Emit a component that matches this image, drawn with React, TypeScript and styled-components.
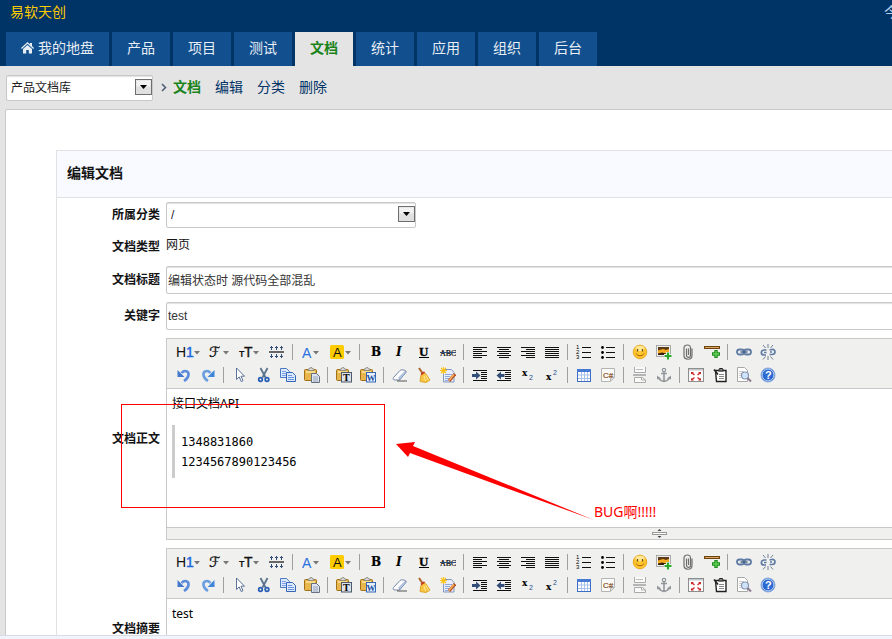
import React from 'react';
import styled, { createGlobalStyle, css } from 'styled-components';

const cjk = '"Liberation Sans", "Noto Sans CJK SC", sans-serif';

const GlobalStyle = createGlobalStyle`
  * { box-sizing: border-box; }
  html, body { margin: 0; }
  body {
    background: #e4e4e4;
    color: #141414;
    font: 12px/18px ${cjk};
    overflow: hidden;
  }
  button, input, select { font: inherit; color: inherit; }
`;

const Window = styled.div`
  height: 100vh;
  display: flex;
  flex-direction: column;
  overflow: hidden;
`;

const Page = styled.div`
  flex: 1;
  min-height: 0;
  width: calc(100% + 8px);
  overflow: hidden;
`;

const StatusStrip = styled.footer`
  flex: none;
  height: 4px;
  background: #f0f4fd;
  border-top: 1px solid #d9dce2;
`;

const Header = styled.header`
  background: #003366;
`;

const TopBar = styled.div`
  display: flex;
  justify-content: space-between;
  height: 32px;
  padding: 2px 2px 0 10px;
  font-size: 14px;
  line-height: 20px;
`;

const Brand = styled.a`
  color: #ffcc00;
  text-decoration: none;
`;

const DateText = styled.span`
  color: #b9d3ee;
`;

const Nav = styled.nav`
  display: flex;
  gap: 3px;
  padding-left: 6px;
`;

const NavTab = styled.a<{ $active?: boolean }>`
  display: flex;
  align-items: center;
  gap: 4px;
  height: 34px;
  padding: 0 15px 2px;
  font-size: 14px;
  color: #e8eef5;
  background: #114f8e;
  text-decoration: none;
  ${p => p.$active && css`
    background: #e4e4e4;
    color: #1a831a;
    font-weight: bold;
  `}
`;

const SubNav = styled.div`
  display: flex;
  align-items: center;
  height: 43px;
  padding-left: 6px;
`;

const SelectBox = styled.div<{ $wide?: boolean }>`
  position: relative;
  width: ${p => (p.$wide ? '250px' : '147px')};
  height: 26px;
`;

const Select = styled.select`
  appearance: none;
  width: 100%;
  height: 100%;
  padding: 0 24px 0 4px;
  border: 1px solid #c8c8c8;
  border-radius: 2px;
  background: #fff;
  box-shadow: inset 0 1px 1px #e2e2e2;
  color: #222;
  outline: none;
`;

const DropArrow = styled.svg`
  position: absolute;
  right: 1px;
  top: 4px;
  pointer-events: none;
`;

const Crumbs = styled.div`
  display: flex;
  align-items: center;
  gap: 14px;
  padding: 0 0 2px 6px;
  font-size: 14px;
`;

const Chevron = styled.svg`
  margin-left: 8px;
`;

const Crumb = styled.a<{ $active?: boolean }>`
  color: ${p => (p.$active ? '#1a831a' : '#003366')};
  font-weight: ${p => (p.$active ? 'bold' : 'normal')};
  text-decoration: none;
`;

const Main = styled.main`
  margin-left: 5px;
  padding: 40px 0 0 50px;
  background: #fff;
  border: 1px solid #c9c9c9;
  border-radius: 2px;
`;

const FormPanel = styled.form`
  border: 1px solid #e2e2e2;
`;

const FormTitle = styled.h1`
  margin: 0;
  height: 47px;
  padding: 0 10px 2px;
  display: flex;
  align-items: center;
  font-size: 14px;
  background: #f8faff;
  border-bottom: 1px solid #e2e2e2;
`;

const Row = styled.div`
  position: relative;
  display: grid;
  grid-template-columns: 103px minmax(0, 1fr);
  column-gap: 6px;
  align-items: center;
  padding: 4px 0;
`;

const Label = styled.label`
  text-align: right;
  font-weight: bold;
`;

const StaticValue = styled.output`
  line-height: 18px;
  padding-bottom: 4px;
`;

const TextInput = styled.input`
  width: 100%;
  height: 28px;
  padding: 0 1px 1px;
  border: 1px solid #c8c8c8;
  border-radius: 2px;
  box-shadow: inset 0 1px 1px #e2e2e2;
  background: #fff;
  color: #333;
  outline: none;
`;

const EditorFrame = styled.div`
  border: 1px solid #c8c8c8;
  background: #fff;
`;

const Toolbar = styled.div`
  height: 50px;
  padding: 1px 5px;
  background: #f0f0ee;
  border-bottom: 1px solid #c8c8c8;
`;

const ToolRow = styled.div`
  display: flex;
  height: 23px;
  align-items: center;
`;

const ToolButton = styled.button`
  flex: none;
  display: flex;
  padding: 0 4px;
  border: 0;
  background: none;
  cursor: pointer;
`;

const Divider = styled.span`
  flex: none;
  width: 1px;
  height: 16px;
  margin: 0 4px 0 3px;
  background: #a0a0a0;
`;

const EditorBody = styled.div<{ $tall?: boolean }>`
  height: ${p => (p.$tall ? '138px' : '98px')};
  padding: 6px 5px;
  color: #000;
  font-family: "Noto Sans", "Noto Sans CJK SC", sans-serif;
  outline: none;
`;

const Paragraph = styled.p`
  margin: 0;
  line-height: 18px;
`;

const CodeBlock = styled.pre`
  margin: 12px 0 0;
  padding: 7px 0 6px 6px;
  border-left: 3px solid #ccc;
  font: 12px/20px "DejaVu Sans Mono", monospace;
`;

const ResizeBar = styled.div`
  display: flex;
  align-items: center;
  height: 12px;
  background: #f0f0ee;
  border-top: 1px solid #c8c8c8;
`;

const ResizeGrip = styled.svg`
  margin-left: 485px;
`;

const Highlight = styled.div`
  position: absolute;
  left: 64px;
  top: 70px;
  width: 264px;
  height: 104px;
  border: 1px solid #ff0000;
  pointer-events: none;
`;

const PointerArrow = styled.svg`
  position: absolute;
  left: 338px;
  top: 106px;
  pointer-events: none;
`;

const Note = styled.span`
  position: absolute;
  left: 537px;
  top: 168px;
  color: #ff0000;
  font: 14px/20px "Noto Sans", "Noto Sans CJK SC", sans-serif;
`;

const sans = 'Liberation Sans, Arial, sans-serif';
const serif = 'Liberation Serif, serif';

const Caret = ({ x }: { x: number }) => <path d={`M${x} 7h6l-3 3.5z`} fill="#777" />;

const lines = (rows: [number, number][], step = 2, start = 3) =>
  rows.map(([x, w], i) => <rect key={i} x={x} y={start + i * step} width={w} height="1" fill="#111" />);

const Clipboard = () => (
  <>
    <rect x=".5" y="2.5" width="12" height="11" rx="1" fill="#e8b64c" stroke="#a06f16" />
    <path d="M2 4h9v2H2z" fill="#f8dc8c" />
    <path d="M4 3.5V2h1.5L6 .7h2L8.500 2H10v1.500z" fill="#dfe0e4" stroke="#77705c" strokeWidth=".7" />
  </>
);

type Icon = { label: string; w?: number; art: React.ReactNode };

const icons: Record<string, Icon> = {
  heading: { label: '段落', w: 25, art: <>
    <text x="0" y="13" fontFamily={sans} fontSize="14" fill="#111">H</text>
    <text x="10" y="13" fontFamily={sans} fontSize="14" fill="#1a66e0" stroke="#1a66e0" strokeWidth=".4">1</text>
    <Caret x={18} /></> },
  font: { label: '字体', w: 21, art: <>
    <text x="0" y="13" fontFamily="DejaVu Sans, DejaVu Serif, serif" fontSize="14" fill="#111" stroke="#111" strokeWidth=".3">ℱ</text>
    <Caret x={14} /></> },
  size: { label: '文字大小', w: 23, art: <>
    <text x="1" y="13" fontFamily={sans} fontSize="9" fontWeight="bold" fill="#111">T</text>
    <text x="6" y="13" fontFamily={sans} fontSize="14" fill="#111" stroke="#111" strokeWidth=".3">T</text>
    <Caret x={15} /></> },
  lineheight: { label: '行距', art: <>
    <path d="M0 7h15v2H0z" fill="#666" />
    <path d="M2.500 2v4M7.500 2v4M12.500 2v4M2.500 10v4M7.500 10v4M12.500 10v4" stroke="#334e78" />
    <path d="M1 3h3v1H1zM6 3h3v1H6zM11 3h3v1h-3zM1 12h3v1H1zM6 12h3v1H6zM11 12h3v1h-3z" fill="#334e78" /></> },
  color: { label: '文字颜色', w: 20, art: <>
    <text x="1" y="14" fontFamily={sans} fontSize="14" fill="#2a6fe0">A</text>
    <Caret x={12} /></> },
  hilite: { label: '文字背景', w: 23, art: <>
    <rect x="1" y="1" width="14" height="14" rx="1.500" fill="#ffcc00" />
    <text x="4" y="12.500" fontFamily={sans} fontSize="13" fill="#111">A</text>
    <Caret x={16} /></> },
  bold: { label: '粗体', art: <text x="3" y="12" fontFamily="DejaVu Serif, serif" fontSize="12" fontWeight="bold" stroke="#000" strokeWidth=".2">B</text> },
  italic: { label: '斜体', art: <text x="4" y="12" fontFamily="DejaVu Serif, serif" fontSize="12" fontWeight="bold" fontStyle="italic">I</text> },
  underline: { label: '下划线', art: <>
    <text x="3" y="12" fontFamily={serif} fontSize="13" fontWeight="bold" stroke="#000" strokeWidth=".3">U</text>
    <path d="M3 13h10v1H3z" /></> },
  strike: { label: '删除线', art: <>
    <text x="0" y="11.500" fontFamily={serif} fontSize="8" stroke="#111" strokeWidth=".2">ABC</text>
    <path d="M0 8h16v1H0z" fill="#334e78" /></> },
  left: { label: '左对齐', art: lines([[1, 14], [1, 9], [1, 14], [1, 9], [1, 14], [1, 9]]) },
  center: { label: '居中', art: lines([[1, 14], [3, 10], [1, 14], [3, 10], [1, 14], [3, 10]]) },
  right: { label: '右对齐', art: lines([[1, 14], [6, 9], [1, 14], [6, 9], [1, 14], [6, 9]]) },
  justify: { label: '两端对齐', art: lines([[1, 14], [1, 14], [1, 14], [1, 14], [1, 14], [1, 14]]) },
  ol: { label: '编号', art: <>
    {lines([[6, 9], [6, 9], [6, 9]], 5)}
    {['1', '2', '3'].map((n, i) => <text key={n} x="0" y={5 + i * 5} fontFamily={sans} fontSize="6">{n}</text>)}</> },
  ul: { label: '项目符号', art: <>
    {lines([[6, 9], [6, 9], [6, 9]], 5)}
    {[3.5, 8.5, 13.5].map(y => <circle key={y} cx="2.500" cy={y} r="1.400" />)}</> },
  smile: { label: '表情', art: <>
    <circle cx="8" cy="8" r="6.800" fill="#ffc72d" stroke="#eda623" />
    <ellipse cx="8" cy="4.500" rx="4.500" ry="2.800" fill="#ffe995" />
    <path d="M5.500 5v2.500M10.500 5v2.500" stroke="#7b430d" strokeWidth="1.300" />
    <path d="M4 9.500c1.500 3 6.500 3 8 0" fill="none" stroke="#a5570c" /></> },
  image: { label: '图片', art: <>
    <rect x=".5" y="1.500" width="14" height="11" fill="#eee" stroke="#999" strokeWidth=".8" />
    <path d="M2 3h11v8H2z" fill="#f7aa20" />
    <path d="M2 3h11v2l-3 1-3-1-5 1.500z" fill="#5b3a14" />
    <path d="M2 9.500l4-1 4 1h3V11H2z" fill="#33200d" />
    <path d="M12 8v8M8 12h8" stroke="#eef7ee" strokeWidth="4" />
    <path d="M12 8.500v7M8.500 12h7" stroke="#2ca82c" strokeWidth="2.200" /></> },
  attach: { label: '附件', art: <path d="M12 4.500v7c0 5-8 5-8 0V4c0-4 6.500-4 6.500 0v7.500c0 2.500-4 2.500-4 0V4.500M8.500 4.500v6.500" fill="none" stroke="#6e6e6e" strokeWidth="1.200" /> },
  hr: { label: '插入横线', art: <>
    <path d="M0 2h16v3H0z" fill="#6d4310" /><path d="M1 3h14v1H1z" fill="#d8a65c" />
    <path d="M12 6v8M8 10h8" stroke="#1d8a1d" strokeWidth="3.400" /><path d="M12 7v6M9 10h6" stroke="#5fd052" strokeWidth="1.400" /></> },
  link: { label: '超级链接', art: <>
    <rect x="1" y="5.500" width="7" height="5" rx="2.500" fill="none" stroke="#5e7ba4" strokeWidth="1.800" />
    <rect x="8" y="5.500" width="7" height="5" rx="2.500" fill="none" stroke="#5e7ba4" strokeWidth="1.800" />
    <path d="M4.500 8h7" stroke="#3f5880" strokeWidth="1.400" /></> },
  unlink: { label: '取消超级链接', art: <>
    <path d="M6.500 6H4C.5 6.500.5 11 4 11h2M9.500 6l2.500-.5c4-.5 4 5 0 5H9.500M4 8.500h2.500M10 8h2" fill="none" stroke="#5e7ba4" strokeWidth="1.700" />
    <path d="M8 4V0M5.500 4L3 1M10.500 4L13 1M8 12v4M5.500 12.500L3 15.500M10.500 12.500l2.500 3" stroke="#6f8098" /></> },
  undo: { label: '后退', art: <>
    <path d="M5.500 6C8.500 2.500 13 4 12.500 8c-.3 2.500-2 4.500-4.500 6" fill="none" stroke="#5b8bdc" strokeWidth="2.600" />
    <path d="M1.500 3v7h7z" fill="#4478cc" /></> },
  redo: { label: '前进', art: <>
    <path d="M10.500 6C7.500 2.500 3 4 3.500 8c.3 2.500 2 4.500 4.500 6" fill="none" stroke="#6b9ee0" strokeWidth="2.600" />
    <path d="M14.500 3v7h-7z" fill="#3f86d8" /></> },
  cursor: { label: '全选', art: <path d="M4.500 1v11.500l2.700-2.600 2 4.600 1.800-.8-2-4.500h3.500z" fill="#fff" stroke="#49648e" strokeWidth=".9" /> },
  cut: { label: '剪切', art: <>
    <path d="M4.500 1l5 9.500M11.500 1l-5 9.500" stroke="#5c738f" strokeWidth="1.800" />
    <circle cx="4.500" cy="12.500" r="1.800" fill="none" stroke="#2960b5" strokeWidth="1.800" />
    <circle cx="11" cy="12.500" r="1.800" fill="none" stroke="#2960b5" strokeWidth="1.800" /></> },
  copy: { label: '复制', art: <>
    <path d="M.5 1.500h6l3 3v6h-9z" fill="#dce8fb" stroke="#4c79c4" /><path d="M2 4.500h4M2 6.500h6M2 8.500h6" stroke="#7ba0e6" />
    <path d="M6.500 5.500h6l3 3v6h-9z" fill="#dce8fb" stroke="#3565b5" /><path d="M8 8.500h4M8 10.500h6M8 12.500h6" stroke="#6b94dd" /></> },
  paste: { label: '粘贴', art: <>
    <Clipboard />
    <path d="M7.500 6.500h5l3 3v6h-8z" fill="#dfe5ee" stroke="#66717f" /><path d="M9 10h5M9 12h5M9 14h5" stroke="#8796ad" strokeWidth=".8" /></> },
  pasteText: { label: '粘贴为无格式文本', art: <>
    <Clipboard />
    <rect x="5.500" y="5.500" width="10" height="9.500" fill="#dce2eb" stroke="#4c596a" />
    <text x="7" y="14" fontFamily={serif} fontSize="10" fontWeight="bold">T</text></> },
  pasteWord: { label: '从Word粘贴', art: <>
    <Clipboard />
    <rect x="6.500" y="5.500" width="9" height="9.500" fill="#e6effd" stroke="#3668b5" />
    <text x="6.500" y="13.500" fontFamily={serif} fontSize="9" fontWeight="bold" fill="#224f9f">W</text></> },
  eraser: { label: '删除格式', art: <>
    <path d="M1.500 10.500L8 3.500c1-1.200 7-.5 6 1.500L7.500 13H3C1 13 .8 11.500 1.500 10.500z" fill="#fdfdff" stroke="#7486a5" />
    <path d="M7.500 13l-.5-2.500L13.500 4l.5 1.500z" fill="#b5cdf0" stroke="#7486a5" strokeWidth=".6" /><path d="M5 14h10" stroke="#555" /></> },
  broom: { label: '清理HTML代码', art: <>
    <path d="M3 1l4 6" stroke="#ad6529" strokeWidth="2" />
    <path d="M5 8l3-2.500 2 1.500 4 6-4 2.500-6-1z" fill="#f7c642" stroke="#e0a52c" />
    <path d="M5 7.500L8.500 5" stroke="#c33a22" strokeWidth="1.600" /><path d="M8 9l1.500 5M9.500 8l3 5" stroke="#fbe794" /></> },
  quick: { label: '一键排版', art: <>
    <path d="M3.500 2.500h8l2.500 3v9.500H3.500z" fill="#e9eefa" stroke="#8297bc" /><path d="M5 7.500h7M5 9.500h5M5 11.500h4M5 13.500h3" stroke="#8da9da" />
    <path d="M3.500 0v7M0 3.500h7M1 1l5 5M6 1L1 6" stroke="#ffc31d" strokeWidth="1.200" />
    <path d="M15 7l-6 7" stroke="#b45120" strokeWidth="3" /><path d="M14 7.500l-5 6" stroke="#ffb35e" strokeWidth="1.200" /></> },
  indent: { label: '增加缩进', art: <>
    {lines([[1, 14], [9, 6], [9, 6], [9, 6], [9, 6], [1, 14]], 2, 3)}
    <path d="M0 7h4V4.500L8.500 8.500 4 12.500V10H0z" fill="#334e78" /></> },
  outdent: { label: '减少缩进', art: <>
    {lines([[1, 14], [9, 6], [9, 6], [9, 6], [9, 6], [1, 14]], 2, 3)}
    <path d="M8.500 7H5V4.500L.5 8.500 5 12.500V10h3.500z" fill="#334e78" /></> },
  sub: { label: '下标', art: <>
    <text x="2" y="9" fontFamily="DejaVu Serif, serif" fontSize="9" fontWeight="bold">x</text>
    <text x="9" y="13" fontFamily={sans} fontSize="7" fill="#24508d">2</text></> },
  sup: { label: '上标', art: <>
    <text x="2" y="13" fontFamily="DejaVu Serif, serif" fontSize="9" fontWeight="bold">x</text>
    <text x="9" y="8" fontFamily={sans} fontSize="7" fill="#24508d">2</text></> },
  table: { label: '表格', art: <>
    <rect x="1.500" y="2.500" width="13" height="12" fill="#fff" stroke="#3c6dc8" /><path d="M1 2h14v3H1z" fill="#4679d4" />
    <path d="M2 8h12M2 11.500h12M5.500 5v9M8.500 5v9M11.500 5v9" stroke="#a9c2ec" /></> },
  code: { label: '插入程序代码', art: <>
    <path d="M1.500 1.500h13v9l-4 4h-9z" fill="#fafaf8" stroke="#b4b4b4" /><path d="M14 10.500h-3.500V14" fill="#ddd" stroke="#b4b4b4" />
    <text x="3" y="10.500" fontFamily={sans} fontSize="8" fill="#8c5424" stroke="#8c5424" strokeWidth=".2">C#</text></> },
  pagebreak: { label: '插入分页符', art: <>
    <path d="M2.500 0v5.500h11V0" fill="#fafafa" stroke="#aaa" /><path d="M4 2.500h7" stroke="#bbb" />
    <path d="M1 7h13v2H1z" fill="#b5b5b5" />
    <path d="M2.500 15.500v-5h8l3 2.500v2.500z" fill="#fafafa" stroke="#aaa" /><path d="M9.500 10.500V13h4" fill="none" stroke="#aaa" /></> },
  anchor: { label: '锚点', art: <>
    <circle cx="8" cy="3" r="1.700" fill="none" stroke="#92979c" strokeWidth="1.200" />
    <path d="M8 5v9M5 6.500h6M2.500 10.500c1 2.500 3 3.500 5.500 4 2.500-.5 4.500-1.500 5.500-4" fill="none" stroke="#92979c" strokeWidth="1.600" />
    <path d="M1 12.500V8.500L5 11.500zM15 12.500V8.500L11 11.500z" fill="#92979c" /></> },
  fullscreen: { label: '全屏显示', art: <>
    <rect x=".5" y="1.500" width="15" height="13" fill="#fff" stroke="#8d8d8d" /><path d="M1 2h14v1.500H1z" fill="#c3c5ca" />
    <path d="M3.500 5.500L6.500 8M12.500 5.500L9.500 8M3.500 13l3-2.500M12.500 13l-3-2.500" stroke="#cf2f2f" strokeWidth="1.500" />
    <path d="M3 5h3L3 7.500zM13 5h-3l3 2.500zM3 13.500h3L3 11zM13 13.500h-3l3-2.500z" fill="#c92525" /></> },
  template: { label: '插入模板', art: <>
    <path d="M3.500 3.500h10.500v11H4.500z" fill="#fff" stroke="#222" strokeWidth="1.400" /><path d="M6.500 4l1-2.500h3l1 2.500z" fill="#888" stroke="#222" />
    <path d="M2 2.500l4 5" stroke="#222" strokeWidth="1.600" /><path d="M7 7.500h5M7 9.500h5M7 11.500h5" stroke="#888" /></> },
  preview: { label: '预览', art: <>
    <path d="M1.500 .5h7l3 3v11h-10z" fill="#fff" stroke="#a8a8a8" /><path d="M3 4.500h5M3 6.500h3M3 8.500h2M3 10.500h2" stroke="#ccc" />
    <circle cx="9" cy="8.500" r="3.500" fill="#cfe3fa" stroke="#8796b0" strokeWidth="1.200" /><path d="M11.500 11l3.500 3.500" stroke="#8b7a90" strokeWidth="2" /></> },
  help: { label: '关于', art: <>
    <circle cx="8" cy="8" r="7" fill="#2d69d2" stroke="#89a9da" /><circle cx="8" cy="8" r="5.900" fill="none" stroke="#d6e4fa" strokeWidth=".8" />
    <text x="5" y="12" fontFamily={sans} fontSize="11" fontWeight="bold" fill="#fff">?</text></> },
};

const toolRows = [
  'heading font size lineheight | color hilite | bold italic underline strike | left center right justify | ol ul | smile image attach hr | link unlink',
  'undo redo | cursor cut copy paste | pasteText pasteWord | eraser broom quick | indent outdent sub sup | table code | pagebreak anchor | fullscreen template preview help',
].map(r => r.split(' '));

const EditorToolbar = () => (
  <Toolbar role="toolbar">
    {toolRows.map((row, r) => (
      <ToolRow key={r}>
        {row.map((name, i) => {
          if (name === '|') return <Divider key={i} />;
          const { label, w = 16, art } = icons[name];
          return (
            <ToolButton key={i} type="button" aria-label={label} title={label}>
              <svg width={w} height="16" viewBox={`0 0 ${w} 16`} aria-hidden="true">{art}</svg>
            </ToolButton>
          );
        })}
      </ToolRow>
    ))}
  </Toolbar>
);

const DropDown = ({ id, label, options, wide }: { id: string; label?: string; options: string[]; wide?: boolean }) => (
  <SelectBox $wide={wide}>
    <Select id={id} aria-label={label}>
      {options.map(o => <option key={o}>{o}</option>)}
    </Select>
    <DropArrow width="17" height="17" viewBox="0 0 17 17" aria-hidden="true">
      <rect x=".5" y=".5" width="16" height="15" fill="#e0e0e0" stroke="#6e6e6e" />
      <path d="M1.500 1.500h14v6h-14z" fill="#f2f2f2" />
      <path d="M5 6h7l-3.500 4z" fill="#000" />
    </DropArrow>
  </SelectBox>
);

const tabs = ['我的地盘', '产品', '项目', '测试', '文档', '统计', '应用', '组织', '后台'];
const crumbs = ['文档', '编辑', '分类', '删除'];

export default function App() {
  return (
    <Window>
      <GlobalStyle />
      <Page>
        <Header>
          <TopBar>
            <Brand href="#">易软天创</Brand>
            <DateText>今</DateText>
          </TopBar>
          <Nav>
            {tabs.map((t, i) => (
              <NavTab key={t} href="#" $active={t === '文档'}>
                {i === 0 && (
                  <svg width="13" height="12" viewBox="0 0 13 12" aria-hidden="true">
                    <path d="M6.500 0l2.500 2.200V1h2v3l2 2-.8.9L6.500 1.800.8 6.900 0 6z" fill="#e8eef5" />
                    <path d="M6.500 3l4.500 4v4.500H7.800V8H5.200v3.500H2V7z" fill="#e8eef5" />
                  </svg>
                )}
                {t}
              </NavTab>
            ))}
          </Nav>
        </Header>
        <SubNav>
          <DropDown id="library" label="文档库" options={['产品文档库']} />
          <Chevron width="6" height="9" viewBox="0 0 6 9" aria-hidden="true">
            <path d="M1 1l3.500 3.500L1 8" fill="none" stroke="#4d5d78" strokeWidth="1.500" />
          </Chevron>
          <Crumbs>
            {crumbs.map((c, i) => <Crumb key={c} href="#" $active={i === 0}>{c}</Crumb>)}
          </Crumbs>
        </SubNav>
        <Main>
          <FormPanel>
            <FormTitle>编辑文档</FormTitle>
            <Row>
              <Label htmlFor="module">所属分类</Label>
              <DropDown id="module" options={['/']} wide />
            </Row>
            <Row>
              <Label htmlFor="type">文档类型</Label>
              <StaticValue id="type">网页</StaticValue>
            </Row>
            <Row>
              <Label htmlFor="title">文档标题</Label>
              <TextInput id="title" defaultValue="编辑状态时 源代码全部混乱" />
            </Row>
            <Row>
              <Label htmlFor="keywords">关键字</Label>
              <TextInput id="keywords" defaultValue="test" />
            </Row>
            <Row>
              <Label as="span" id="content-label">文档正文</Label>
              <EditorFrame>
                <EditorToolbar />
                <EditorBody $tall contentEditable suppressContentEditableWarning role="textbox" aria-labelledby="content-label">
                  <Paragraph>接口文档API</Paragraph>
                  <CodeBlock>{'1348831860\n1234567890123456'}</CodeBlock>
                </EditorBody>
                <ResizeBar>
                  <ResizeGrip width="15" height="9" viewBox="0 0 15 9" aria-hidden="true">
                    <path d="M7.500 0l2 2h-4zM7.500 9l2-2h-4z" fill="#444" />
                    <rect x=".5" y="3.500" width="14" height="2" fill="#fff" stroke="#999" />
                  </ResizeGrip>
                </ResizeBar>
              </EditorFrame>
              <Highlight />
              <PointerArrow width="200" height="82" viewBox="0 0 200 82" aria-hidden="true">
                <path d="M1 4l19-2-2 4 181 74L15 13l-2 4z" fill="#ff0000" />
              </PointerArrow>
              <Note>BUG啊!!!!!</Note>
            </Row>
            <Row>
              <Label as="span" id="summary-label">文档摘要</Label>
              <EditorFrame>
                <EditorToolbar />
                <EditorBody contentEditable suppressContentEditableWarning role="textbox" aria-labelledby="summary-label">
                  <Paragraph>test</Paragraph>
                </EditorBody>
                <ResizeBar />
              </EditorFrame>
            </Row>
          </FormPanel>
        </Main>
      </Page>
      <StatusStrip />
    </Window>
  );
}
